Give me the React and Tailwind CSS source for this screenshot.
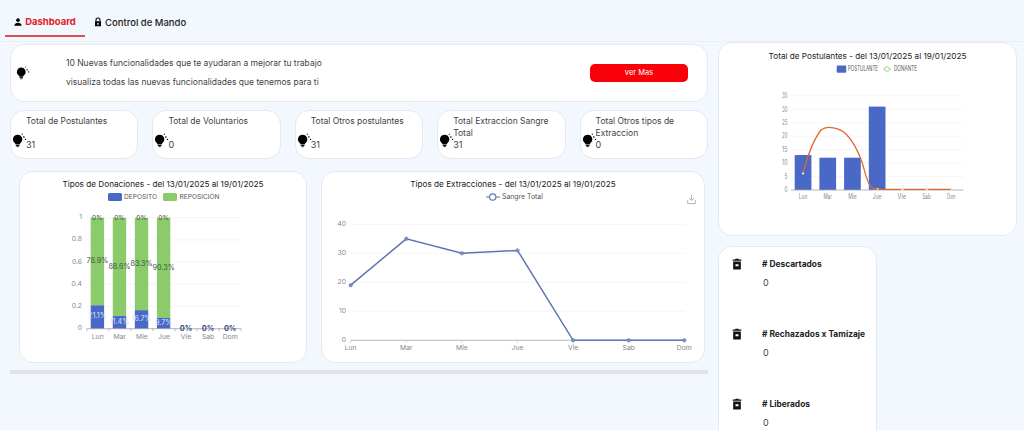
import React from "react";

const FONT = "font-['Inter','Liberation_Sans',sans-serif]";
const GRID = "#eef0f3";

function Bulb({ className = "" }) {
  return (
    <svg viewBox="0 0 16 16" className={className} fill="currentColor">
      <path d="M6 1.800a5 5 0 0 1 3.100 8.900c-.6.5-.9 1-1 1.600H3.900c-.1-.6-.4-1.100-1-1.600A5 5 0 0 1 6 1.800z" />
      <rect x="4" y="12.800" width="4" height="1" />
      <rect x="4.800" y="14.200" width="2.400" height=".9" />
      <rect x="12" y="3.600" width="1.400" height="1.400" transform="rotate(45 12.700 4.300)" />
      <circle cx="14.400" cy="6.800" r=".7" />
      <circle cx="11" cy="1.200" r=".6" />
    </svg>
  );
}

function Person({ className = "" }) {
  return (
    <svg viewBox="0 0 12 12" className={className} fill="currentColor">
      <circle cx="6" cy="3.200" r="2.700" />
      <path d="M.6 11.500c0-3 2.600-4.400 5.400-4.400s5.400 1.400 5.400 4.400z" />
    </svg>
  );
}

function Lock({ className = "" }) {
  return (
    <svg viewBox="0 0 12 14" className={className}>
      <path d="M3 6V4a3 3 0 0 1 6 0v2" fill="none" stroke="currentColor" strokeWidth="1.600" />
      <path fill="currentColor" fillRule="evenodd" d="M1.500 6h9v7.500h-9zM6 8.200a1.300 1.300 0 0 0-.6 2.400V12h1.200v-1.400A1.300 1.300 0 0 0 6 8.200z" />
    </svg>
  );
}

function Trash({ className = "" }) {
  return (
    <svg viewBox="0 0 12 14" className={className}>
      <path fill="currentColor" d="M4.200.6h3.600l.5 1h3v1.600H.7V1.600h3z" />
      <path fill="currentColor" fillRule="evenodd" d="M1.400 4h9.200v9.600H1.400zM4.200 7.200v2.600h3.600V7.200z" />
    </svg>
  );
}

function Card({ className = "", children }) {
  return (
    <div className={`bg-white rounded-[14px] border border-[#e4eaf3] ${className}`}>{children}</div>
  );
}

function Stat({ line1, line2 = "", value }) {
  return (
    <Card className="h-[49px] relative pl-[15px] pt-[4px] overflow-hidden">
      <Bulb className="absolute left-[1px] top-[22px] w-[15px] h-[15px] text-black" />
      <div className="text-[8.500px] leading-[12px] h-[12px] text-[#3f3f46] whitespace-nowrap">{line1}</div>
      <div className="text-[8.500px] leading-[12px] h-[12px] text-[#3f3f46]">{line2}</div>
      <div className="text-[9px] leading-[11px] text-[#3f3f46]">{value}</div>
    </Card>
  );
}

function DonationsChart() {
  const days = ["Lun", "Mar", "Mie", "Jue", "Vie", "Sab", "Dom"];
  const x0 = 86.700, band = 22.070, y0 = 327.700, h = 111;
  const data = [
    [0.211, "21.1%", "78.9%"],
    [0.114, "11.4%", "88.6%"],
    [0.167, "16.7%", "83.3%"],
    [0.097, "9.7%", "90.3%"],
  ];
  return (
    <svg viewBox="20 186 286 175" className="w-[286px] h-[175px] block">
      <rect x="108" y="192" width="14" height="8" rx="1.500" fill="#4a69c6" />
      <text x="124" y="198" fontSize="6.600" fill="#555">DEPOSITO</text>
      <rect x="163" y="192" width="14" height="8" rx="1.500" fill="#8ccb6c" />
      <text x="179.500" y="198" fontSize="6.600" fill="#555">REPOSICIÓN</text>
      {[0, 0.2, 0.4, 0.6, 0.8, 1].map((v) => (
        <g key={v}>
          {v > 0 && <line x1={x0} x2="241" y1={y0 - v * h} y2={y0 - v * h} stroke={GRID} strokeWidth="0.700" />}
          <text x="82" y={y0 - v * h + 1.500} fontSize="6.800" textAnchor="end" fill="#888">{v}</text>
        </g>
      ))}
      {data.map(([v], i) => {
        const bx = x0 + 4 + i * band;
        return (
          <g key={i}>
            <rect x={bx} y={y0 - h} width="13.400" height={h * (1 - v)} fill="#8ccb6c" />
            <rect x={bx} y={y0 - h * v} width="13.400" height={h * v} fill="#4a69c6" />
          </g>
        );
      })}
      <line x1={x0} x2="241" y1={y0} y2={y0} stroke="#9ca3af" strokeWidth="0.800" />
      {[0, 1, 2, 3, 4, 5, 6, 7].map((i) => (
        <line key={i} x1={x0 + i * band} x2={x0 + i * band} y1={y0} y2={y0 + 2.500} stroke="#9ca3af" strokeWidth="0.700" />
      ))}
      {days.map((d, i) => (
        <text key={d} x={x0 + band / 2 + i * band} y={337.500} fontSize="6.800" textAnchor="middle" fill="#888">{d}</text>
      ))}
      {data.map(([v, a, b], i) => {
        const cx = x0 + 4 + 6.700 + i * band;
        return (
          <g key={i}>
            <text x={cx} y={y0 - h * v / 2 + 1.500} fontSize="7.200" textAnchor="middle" fill="#dbe4ff">{a}</text>
            <text x={cx} y={y0 - h * (v + (1 - v) / 2) + 2} fontSize="7.200" textAnchor="middle" fill="#46523f">{b}</text>
            <text x={cx} y={y0 - h + 2} fontSize="6.600" textAnchor="middle" fill="#46523f">0%</text>
          </g>
        );
      })}
      {[4, 5, 6].map((i) => (
        <text key={i} x={x0 + band / 2 + i * band} y="329.700" fontSize="7.400" fontWeight="700" textAnchor="middle" fill="#3b4a78">0%</text>
      ))}
    </svg>
  );
}

function ExtractionsChart() {
  const days = ["Lun", "Mar", "Mie", "Jue", "Vie", "Sab", "Dom"];
  const vals = [19, 35, 30, 31, 0, 0, 0];
  const x0 = 350.700, st = 55.600, y0 = 339.300, u = 2.900;
  const pts = vals.map((v, i) => [x0 + i * st, y0 - v * u]);
  return (
    <svg viewBox="322 186 382 175" className="w-[382px] h-[175px] block">
      <line x1="486" x2="500" y1="196" y2="196" stroke="#6074b4" strokeWidth="1" />
      <circle cx="492.700" cy="196" r="3.200" fill="#fff" stroke="#6074b4" strokeWidth="1.200" />
      <text x="502" y="198.300" fontSize="6.900" fill="#555">Sangre Total</text>
      <g fill="none" stroke="#9ca3af" strokeWidth="0.800">
        <path d="M691.500 194v5.500" />
        <path d="M689 197l2.500 2.500 2.500-2.500" />
        <path d="M687.700 199v3.500h7.600V199" />
      </g>
      {[0, 10, 20, 30, 40].map((v) => (
        <g key={v}>
          {v > 0 && <line x1={x0} x2="685" y1={y0 - v * u} y2={y0 - v * u} stroke={GRID} strokeWidth="0.700" />}
          <text x="346" y={y0 - v * u + 1.400} fontSize="6.800" textAnchor="end" fill="#888">{v}</text>
        </g>
      ))}
      <line x1={x0} x2="685" y1={y0} y2={y0} stroke="#a3a8b3" strokeWidth="0.800" />
      {days.map((d, i) => (
        <g key={d}>
          <line x1={x0 + i * st} x2={x0 + i * st} y1={y0} y2={y0 + 2.500} stroke="#c2c6ce" strokeWidth="0.700" />
          <text x={x0 + i * st} y="349.200" fontSize="6.800" textAnchor="middle" fill="#888">{d}</text>
        </g>
      ))}
      <polyline points={pts.map((p) => p.join(",")).join(" ")} fill="none" stroke="#6074b4" strokeWidth="1.500" />
      {pts.map((p, i) => (
        <circle key={i} cx={p[0]} cy={p[1]} r="1.700" fill="#8192c8" stroke="#6074b4" strokeWidth="0.600" />
      ))}
    </svg>
  );
}

function PostulantesChart() {
  const days = ["Lun", "Mar", "Mie", "Jue", "Vie", "Sab", "Dom"];
  const x0 = 791, band = 24.700, y0 = 190, u = 2.690;
  const bars = [13, 12, 12, 31];
  return (
    <svg viewBox="719 59 297 176" className="w-[297px] h-[176px] block">
      <rect x="836.700" y="65.500" width="9.500" height="7.300" rx="1" fill="#4a69c6" />
      <text x="848" y="71.300" fontSize="7" fill="#555" textLength="30" lengthAdjust="spacingAndGlyphs">POSTULANTE</text>
      <line x1="883" x2="891" y1="69" y2="69" stroke="#8ccb6c" strokeWidth="0.800" />
      <circle cx="887" cy="69" r="2.300" fill="#fff" stroke="#8ccb6c" strokeWidth="0.800" />
      <text x="894" y="71.300" fontSize="7" fill="#555" textLength="23" lengthAdjust="spacingAndGlyphs">DONANTE</text>
      {[0, 5, 10, 15, 20, 25, 30, 35].map((v) => (
        <g key={v}>
          {v > 0 && <line x1={x0} x2="963" y1={y0 - v * u} y2={y0 - v * u} stroke={GRID} strokeWidth="0.700" />}
          <text x="787.500" y={y0 - v * u + 2.200} fontSize="7" textAnchor="end" fill="#888" textLength={v < 10 ? 3 : 5.500} lengthAdjust="spacingAndGlyphs">{v}</text>
        </g>
      ))}
      {bars.map((v, i) => (
        <rect key={i} x={794.700 + i * band} y={y0 - v * u} width="16.700" height={v * u} fill="#4a69c6" />
      ))}
      <line x1={x0} x2="963.500" y1={y0} y2={y0} stroke="#9ca3af" strokeWidth="0.800" />
      {days.map((d, i) => (
        <text key={d} x={803 + i * band} y="199" fontSize="7" textAnchor="middle" fill="#888" textLength="8.500" lengthAdjust="spacingAndGlyphs">{d}</text>
      ))}
      <path
        d="M803 173.300C806 162 813 140 821 130C824 127.500 826 127.300 828.300 127.300C835 127.300 841 129 846 134C852 140 858 151 862 162C865 172 867 183 871 187C873 189 875 189.300 878 189.300L951 189.300"
        fill="none"
        stroke="#e0672e"
        strokeWidth="1.300"
      />
      <circle cx="803" cy="173.500" r="1" fill="#fff" />
      <circle cx="877.700" cy="189" r="1.200" fill="#d6c76b" />
      {[902.400, 927, 951.800].map((x) => (
        <circle key={x} cx={x} cy="189.300" r="1.200" fill="#e5e7c8" />
      ))}
    </svg>
  );
}

function Metric({ title, className = "" }) {
  return (
    <div className={`flex ${className}`}>
      <Trash className="w-[10px] h-[12px] mt-[1px] ml-[13px] text-[#111] shrink-0" />
      <div className="ml-[20px]">
        <div className="text-[8.400px] leading-[14px] font-bold text-[#222] whitespace-nowrap">{title}</div>
        <div className="text-[9px] leading-[12px] text-[#444] mt-[6px] pl-[1px]">0</div>
      </div>
    </div>
  );
}

export default function App() {
  return (
    <div className={`${FONT} w-[1024px] h-[430px] overflow-hidden bg-[#f3f7fe] flex flex-col`}>
      <div className="h-[42px] shrink-0 border-b border-[#ebf0f8] flex items-start pl-[5px]">
        <div className="w-[80px] h-[37px] border-b-2 border-[#dc4f5a] flex items-center justify-center gap-[3px] pt-[10px]">
          <Person className="w-[8px] h-[8px] text-black mb-[2px]" />
          <span className="text-[9.500px] font-bold text-[#e0202a]">Dashboard</span>
        </div>
        <div className="ml-[9px] h-[37px] flex items-center gap-[3px] pt-[10px]">
          <Lock className="w-[8px] h-[10px] text-black mb-[3px]" />
          <span className="text-[9.500px] font-medium text-[#222]">Control de Mando</span>
        </div>
      </div>
      <div className="flex gap-[10px] pl-[10px] pr-[7px]">
        <div className="w-[698px] shrink-0 flex flex-col">
          <Card className="h-[58px] mt-[2px] flex items-center relative">
            <Bulb className="w-[14px] h-[14px] ml-[5px] text-black" />
            <div className="ml-[36px] text-[#3f3f46] text-[8.500px]">
              <div className="leading-[19px]">10 Nuevas funcionalidades que te ayudaran a mejorar tu trabajo</div>
              <div className="leading-[19px]">visualiza todas las nuevas funcionalidades que tenemos para ti</div>
            </div>
            <button className="absolute right-[19px] top-[19px] w-[98px] h-[18px] rounded-[5px] bg-[#f70008] text-white text-[7.500px]">ver Mas</button>
          </Card>
          <div className="grid grid-cols-5 gap-[14px] mt-[8px]">
            <Stat line1="Total de Postulantes" value="31" />
            <Stat line1="Total de Voluntarios" value="0" />
            <Stat line1="Total Otros postulantes" value="31" />
            <Stat line1="Total Extraccion Sangre" line2="Total" value="31" />
            <Stat line1="Total Otros tipos de" line2="Extraccion" value="0" />
          </div>
          <div className="flex gap-[14px] mt-[12px] pl-[9px] pr-[3px]">
            <Card className="w-[288px] h-[192px] flex flex-col overflow-hidden">
              <div className="text-center text-[8.200px] leading-[12px] pt-[6px] text-[#222] h-[15px] whitespace-nowrap">Tipos de Donaciones - del 13/01/2025 al 19/01/2025</div>
              <DonationsChart />
            </Card>
            <Card className="flex-1 h-[192px] flex flex-col overflow-hidden">
              <div className="text-center text-[8.200px] leading-[12px] pt-[6px] text-[#222] h-[15px] whitespace-nowrap">Tipos de Extracciones - del 13/01/2025 al 19/01/2025</div>
              <ExtractionsChart />
            </Card>
          </div>
          <div className="h-[4px] mt-[7px] bg-[#e0e3e8]" />
        </div>
        <div className="flex-1 flex flex-col">
          <Card className="h-[194px] flex flex-col overflow-hidden">
            <div className="text-center text-[8.200px] leading-[12px] pt-[7px] text-[#222] h-[16px] whitespace-nowrap">Total de Postulantes - del 13/01/2025 al 19/01/2025</div>
            <PostulantesChart />
          </Card>
          <Card className="w-[159px] h-[200px] mt-[10px] pt-[10px] rounded-b-none overflow-hidden">
            <Metric title="# Descartados" />
            <Metric title="# Rechazados x Tamizaje" className="mt-[38px]" />
            <Metric title="# Liberados" className="mt-[38px]" />
          </Card>
        </div>
      </div>
    </div>
  );
}
